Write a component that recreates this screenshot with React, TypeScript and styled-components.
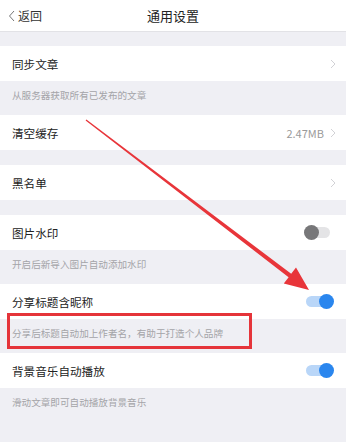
import React from "react";
import styled, { createGlobalStyle } from "styled-components";

const Global = createGlobalStyle`
  html, body { margin: 0; padding: 0; background: #efeff4; }
  body { font-family: "Noto Sans CJK SC", "Noto Sans", sans-serif; -webkit-font-smoothing: antialiased; }
`;

const Page = styled.div`
  position: relative;
  width: 346px;
  height: 442px;
  overflow: hidden;
  background: #efeff4;
  display: flex;
  flex-direction: column;
`;

const Header = styled.div`
  height: 31px;
  background: #fff;
  border-bottom: 1px solid #e2e2e6;
  display: grid;
  grid-template-columns: 1fr auto 1fr;
  align-items: center;
  padding: 0 8px;
  flex-shrink: 0;
`;

const Back = styled.div`
  display: flex;
  align-items: center;
  gap: 3px;
  font-size: 12px;
  color: #333;
`;

const Title = styled.div`
  font-size: 13px;
  color: #222;
`;

const Spacer = styled.div<{ $h: number }>`
  height: ${(p) => p.$h}px;
  flex-shrink: 0;
`;

const Row = styled.div`
  height: 35px;
  background: #fff;
  display: flex;
  align-items: center;
  padding: 0 10px 0 12px;
  flex-shrink: 0;
`;

const Label = styled.div`
  flex: 1;
  font-size: 11.6px;
  color: #222;
`;

const Value = styled.div`
  font-size: 11px;
  color: #9a9a9a;
  margin-right: 6px;
`;

const Caption = styled.div`
  height: 34px;
  box-sizing: border-box;
  padding: 7px 12px 0;
  font-size: 9.6px;
  line-height: 14px;
  color: #a4a4a8;
  flex-shrink: 0;
`;

const Track = styled.div<{ $on: boolean }>`
  position: relative;
  width: 26px;
  height: 11px;
  border-radius: 6px;
  background: ${(p) => (p.$on ? "#b9d6f8" : "#e4e4e6")};
  margin-right: ${(p) => (p.$on ? "4px" : "6px")};
`;

const Knob = styled.div<{ $on: boolean }>`
  position: absolute;
  top: -2px;
  left: ${(p) => (p.$on ? "13px" : "0px")};
  width: 15px;
  height: 15px;
  border-radius: 50%;
  background: ${(p) => (p.$on ? "#2a86ee" : "#777779")};
`;

const Overlay = styled.svg`
  position: absolute;
  left: 0;
  top: 0;
  pointer-events: none;
`;

const Chevron = () => (
  <svg width="6" height="10" viewBox="0 0 6 10">
    <path d="M1 1 L5 5 L1 9" fill="none" stroke="#d2d2d6" strokeWidth="1" />
  </svg>
);

const BackArrow = () => (
  <svg width="7" height="12" viewBox="0 0 7 12">
    <path d="M6 1 L1.5 6 L6 11" fill="none" stroke="#666" strokeWidth="0.9" />
  </svg>
);

const Toggle = ({ on }: { on: boolean }) => (
  <Track $on={on}>
    <Knob $on={on} />
  </Track>
);

export default function App() {
  return (
    <Page>
      <Global />
      <Header>
        <Back>
          <BackArrow />
          <span>返回</span>
        </Back>
        <Title>通用设置</Title>
        <div />
      </Header>
      <Spacer $h={14} />
      <Row>
        <Label>同步文章</Label>
        <Chevron />
      </Row>
      <Caption>从服务器获取所有已发布的文章</Caption>
      <Row>
        <Label>清空缓存</Label>
        <Value>2.47MB</Value>
        <Chevron />
      </Row>
      <Spacer $h={15} />
      <Row>
        <Label>黑名单</Label>
        <Chevron />
      </Row>
      <Spacer $h={15} />
      <Row>
        <Label>图片水印</Label>
        <Toggle on={false} />
      </Row>
      <Caption>开启后新导入图片自动添加水印</Caption>
      <Row>
        <Label>分享标题含昵称</Label>
        <Toggle on />
      </Row>
      <Caption>分享后标题自动加上作者名，有助于打造个人品牌</Caption>
      <Row>
        <Label>背景音乐自动播放</Label>
        <Toggle on />
      </Row>
      <Caption>滑动文章即可自动播放背景音乐</Caption>

      <Overlay width="346" height="442" viewBox="0 0 346 442">
        <rect x="8.5" y="314.5" width="242" height="33" fill="none" stroke="#e5343a" strokeWidth="3" />
        <polygon
          points="86,120 86.4,119.6 291.2,273.8 296,267.6 309,290 283.8,283.4 288.6,277.2 85.6,120.4"
          fill="#e8353a"
        />
      </Overlay>
    </Page>
  );
}
